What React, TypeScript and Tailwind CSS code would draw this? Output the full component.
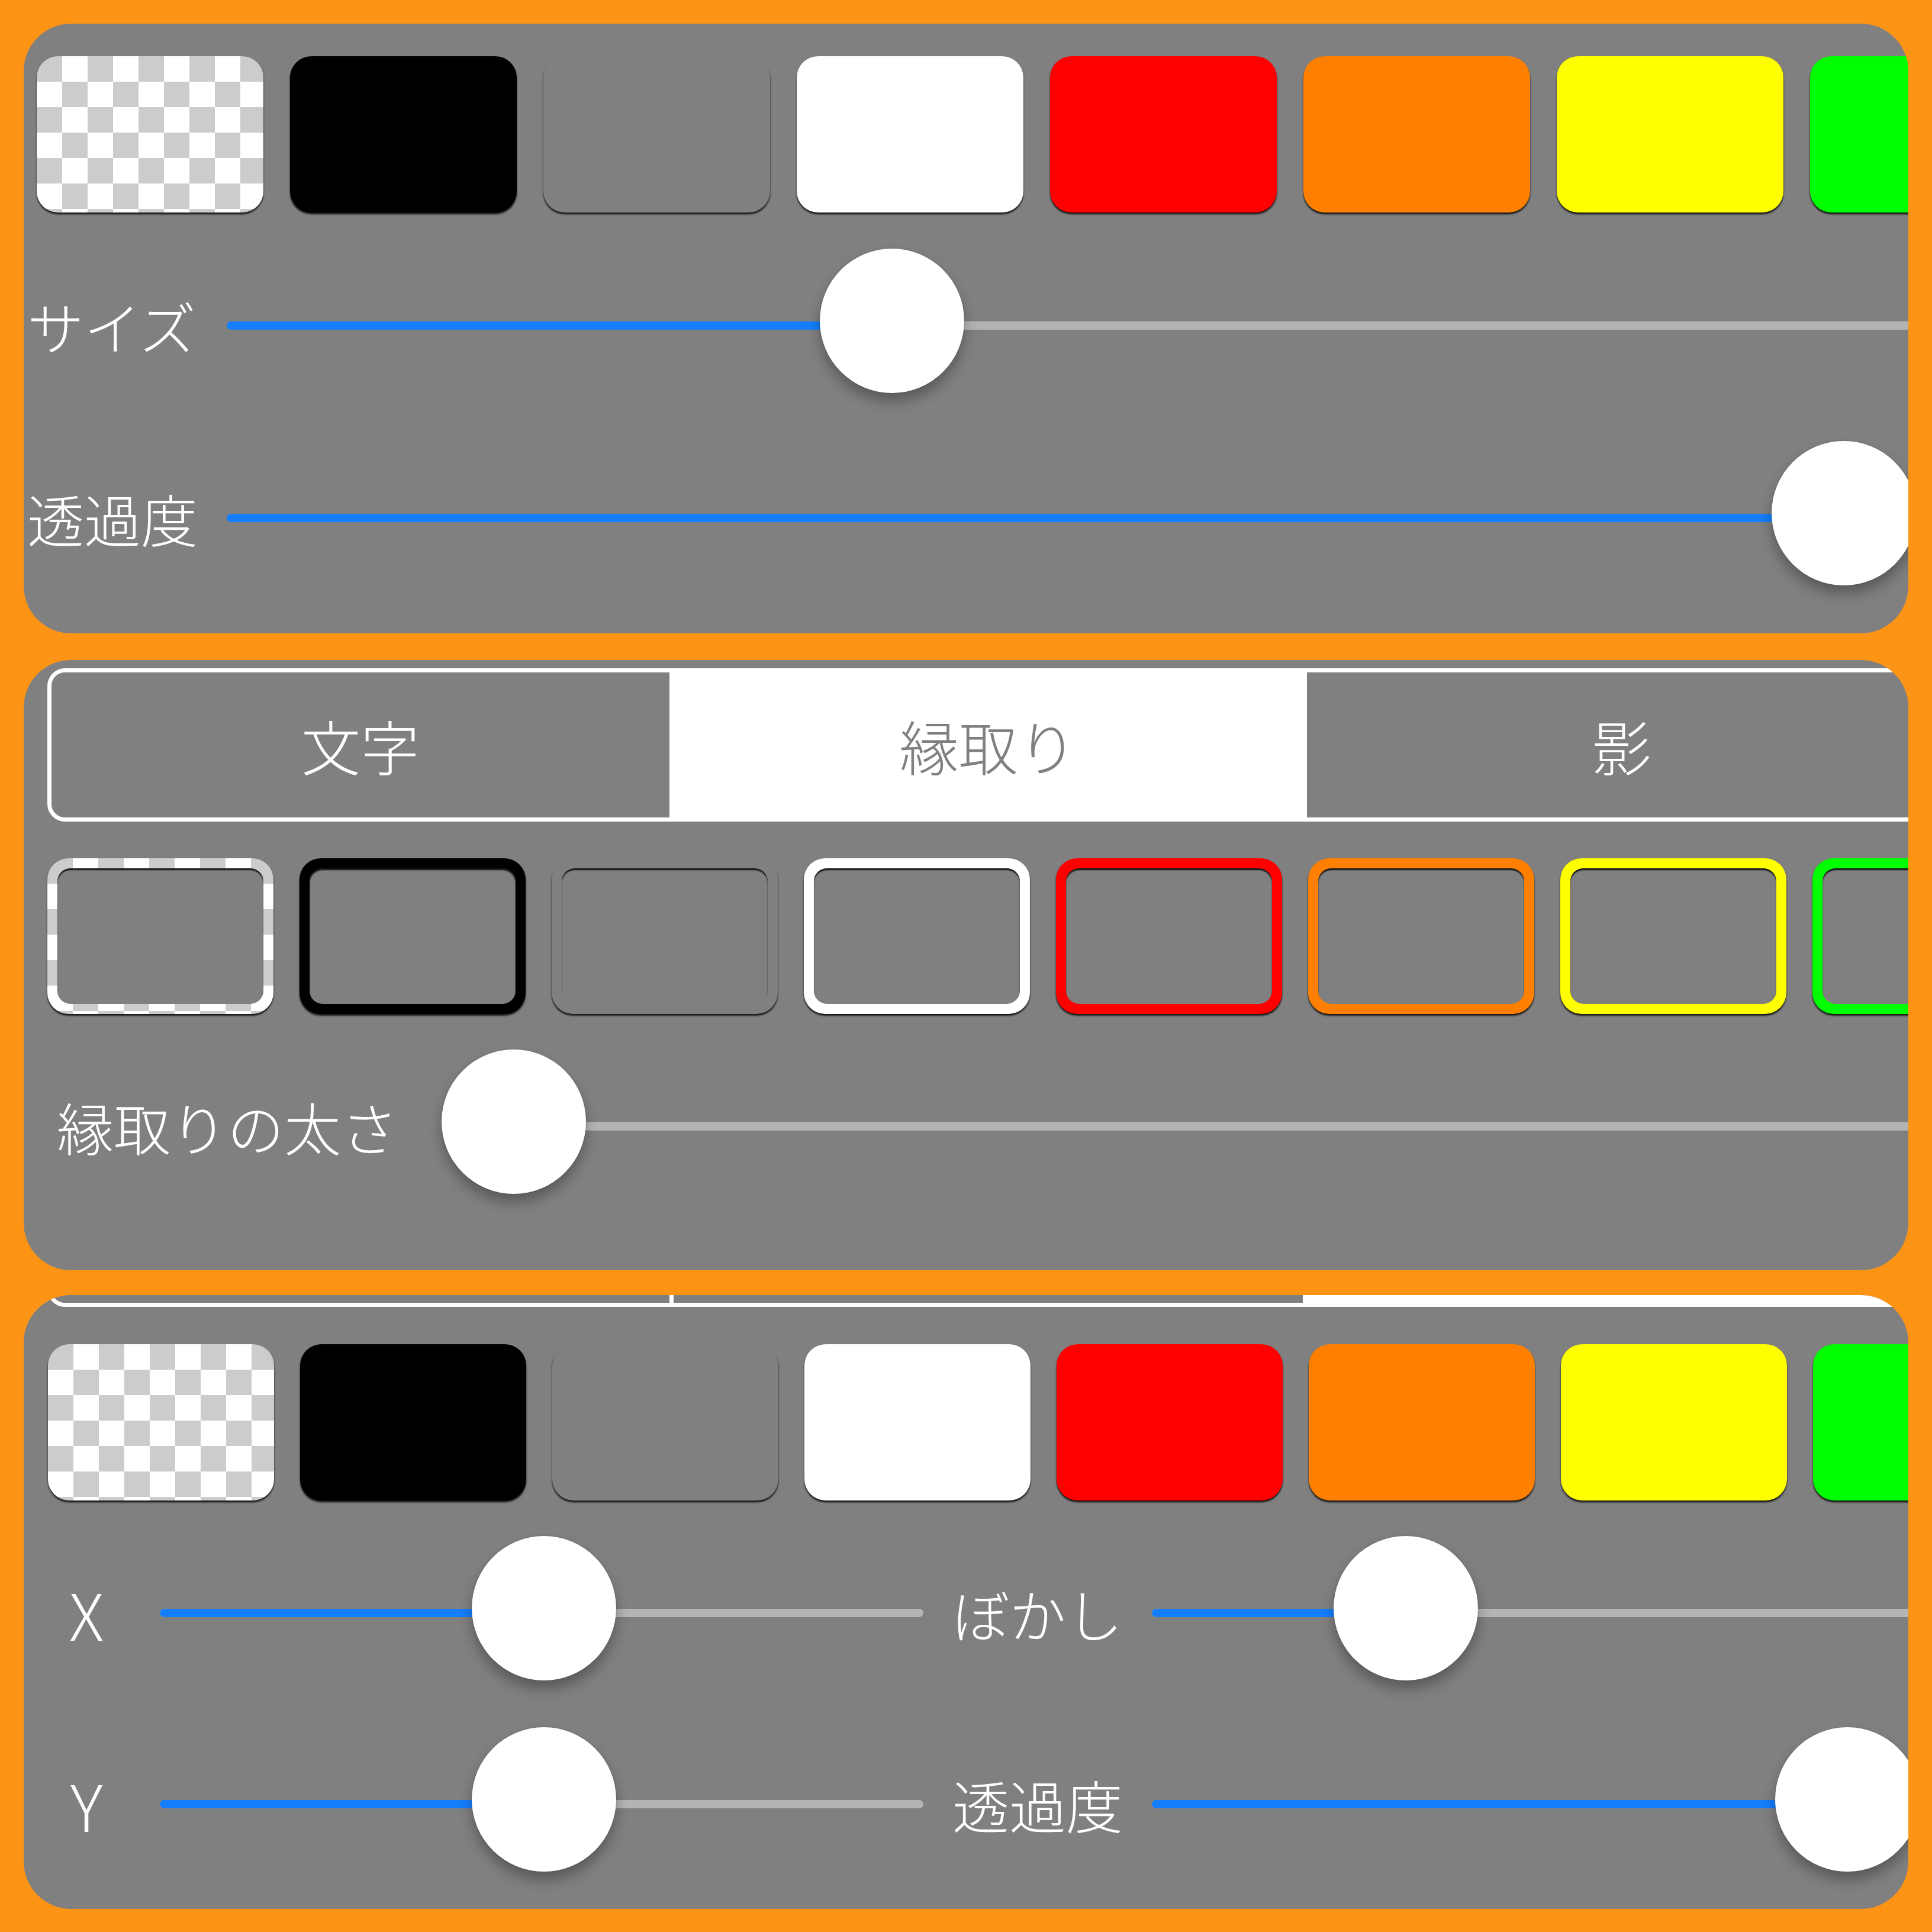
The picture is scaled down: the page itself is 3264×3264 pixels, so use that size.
import React from "react";

type Sw = { kind: "checker" | "solid"; cls: string };

const SWATCHES: Sw[] = [
  { kind: "checker", cls: "bg-[conic-gradient(#ffffff_25%,#cccccc_0_50%,#ffffff_0_75%,#cccccc_0)] bg-[length:86px_86px]" },
  { kind: "solid", cls: "bg-black" },
  { kind: "solid", cls: "bg-[#808080]" },
  { kind: "solid", cls: "bg-white" },
  { kind: "solid", cls: "bg-[#ff0000]" },
  { kind: "solid", cls: "bg-[#ff8000]" },
  { kind: "solid", cls: "bg-[#ffff00]" },
  { kind: "solid", cls: "bg-[#00ff00]" },
];

function SolidSwatches({ gapCls, wCls }: { gapCls: string; wCls: string }) {
  return (
    <div className={`flex ${gapCls}`}>
      {SWATCHES.map((s, i) => (
        <div
          key={i}
          className={`${wCls} h-[264px] shrink-0 rounded-[36px] shadow-[0_3px_3px_rgba(0,0,0,0.85)] ${s.cls}`}
        />
      ))}
    </div>
  );
}

function OutlineSwatches() {
  return (
    <div className="flex gap-[44px]">
      {SWATCHES.map((s, i) => (
        <div
          key={i}
          className={`w-[382px] h-[263px] shrink-0 rounded-[36px] p-[17px] shadow-[0_3px_3px_rgba(0,0,0,0.85)] ${s.cls}`}
        >
          <div className="w-full h-full rounded-[22px] bg-[#808080] shadow-[inset_0_3px_2px_rgba(0,0,0,0.85)]" />
        </div>
      ))}
    </div>
  );
}

function Slider({ width, value }: { width: number; value: number }) {
  return (
    <div className="relative h-[14px] shrink-0 rounded-full bg-[#b4b4b4]" style={{ width }}>
      <div className="absolute left-0 top-0 h-full rounded-full bg-[#157efb]" style={{ width: value }} />
      <div
        className="absolute top-[-123px] w-[244px] h-[244px] rounded-full bg-white shadow-[0_14px_22px_rgba(0,0,0,0.3),0_0_2px_rgba(0,0,0,0.25)]"
        style={{ left: value - 122 }}
      />
    </div>
  );
}

const TXT = "font-['Noto_Sans_CJK_JP','Noto_Sans',sans-serif] font-light text-white leading-none";

function Segmented({ selected, showLabels }: { selected: number; showLabels: boolean }) {
  const labels = ["文字", "縁取り", "影"];
  return (
    <div className="flex h-[259px] w-[3198px] shrink-0 rounded-[30px] border-[7px] border-white overflow-hidden">
      {labels.map((l, i) => (
        <div
          key={i}
          className={`flex items-center justify-center shrink-0 h-full ${
            i === 0 ? "w-[1044px]" : "w-[1070px] border-l-[7px] border-white"
          } ${i === selected ? "bg-white" : "bg-[#808080]"}`}
        >
          {showLabels && (
            <span
              className={`font-['Noto_Sans_CJK_JP','Noto_Sans',sans-serif] font-light leading-none text-[100px] ${
                i === selected ? "text-[#808080]" : "text-white"
              }`}
            >
              {l}
            </span>
          )}
        </div>
      ))}
    </div>
  );
}

export default function App() {
  return (
    <div className="w-[3264px] h-[3264px] bg-[#fe9416] flex flex-col px-[40px] pt-[40px]">
      {/* Panel 1 */}
      <div className="h-[1030px] w-[3184px] shrink-0 rounded-[80px] bg-[#808080] overflow-hidden flex flex-col">
        <div className="ml-[22px] mt-[55px]">
          <SolidSwatches gapCls="gap-[45px]" wCls="w-[383px]" />
        </div>
        <div className="flex items-center h-[244px] mt-[69px] ml-[6px]">
          <div className={`w-[337px] shrink-0 text-[96px] ${TXT}`}>サイズ</div>
          <Slider width={2857} value={1124} />
        </div>
        <div className="flex items-center h-[244px] mt-[81px] ml-[6px]">
          <div className={`w-[337px] shrink-0 text-[96px] ${TXT}`}>透過度</div>
          <Slider width={2857} value={2732} />
        </div>
      </div>

      {/* Panel 2 */}
      <div className="h-[1031px] w-[3184px] shrink-0 mt-[45px] rounded-[80px] bg-[#808080] overflow-hidden flex flex-col">
        <div className="ml-[40px] mt-[14px]">
          <Segmented selected={1} showLabels={true} />
        </div>
        <div className="ml-[40px] mt-[62px]">
          <OutlineSwatches />
        </div>
        <div className="flex items-center h-[244px] mt-[68px] ml-[56px]">
          <div className={`w-[650px] shrink-0 text-[96px] ${TXT}`}>縁取りの太さ</div>
          <Slider width={2494} value={122} />
        </div>
      </div>

      {/* Panel 3 */}
      <div className="h-[1037px] w-[3184px] shrink-0 mt-[42px] rounded-[80px] bg-[#808080] overflow-hidden flex flex-col">
        <div className="ml-[40px] mt-[-239px]">
          <Segmented selected={2} showLabels={false} />
        </div>
        <div className="ml-[41px] mt-[63px]">
          <SolidSwatches gapCls="gap-[44px]" wCls="w-[382px]" />
        </div>
        <div className="flex items-center h-[244px] mt-[68px]">
          <div className={`ml-[40px] w-[132px] shrink-0 text-center text-[108px] ${TXT}`}>X</div>
          <div className="ml-[58px]">
            <Slider width={1290} value={649} />
          </div>
          <div className={`w-[386px] shrink-0 text-center text-[96px] ${TXT}`}>ぼかし</div>
          <Slider width={1294} value={429} />
        </div>
        <div className="flex items-center h-[244px] mt-[79px]">
          <div className={`ml-[40px] w-[132px] shrink-0 text-center text-[108px] ${TXT}`}>Y</div>
          <div className="ml-[58px]">
            <Slider width={1290} value={649} />
          </div>
          <div className={`w-[386px] shrink-0 text-center text-[96px] ${TXT}`}>透過度</div>
          <Slider width={1294} value={1175} />
        </div>
      </div>
    </div>
  );
}
